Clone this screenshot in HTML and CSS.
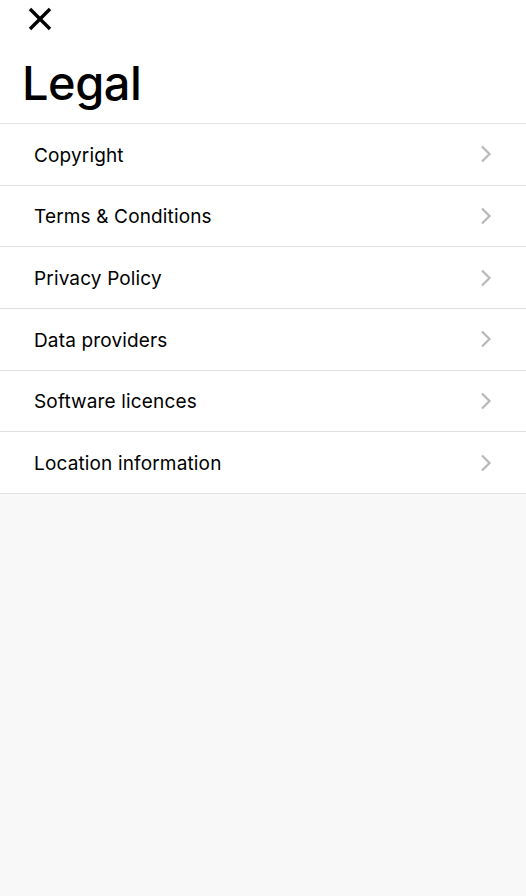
FILE: index.html
```html
<!DOCTYPE html>
<html lang="en">
<head>
<meta charset="utf-8">
<title>Legal</title>
<link rel="stylesheet" href="styles.css">
</head>
<body>
<div class="page">
  <header class="header">
    <button class="close" aria-label="Close">
      <svg width="24" height="24" viewBox="0 0 24 24"><path d="M2 2 L22 22 M22 2 L2 22" stroke="#000" stroke-width="3.4" fill="none"/></svg>
    </button>
    <h1 class="title">Legal</h1>
  </header>
  <ul class="list">
    <li class="row"><span class="label">Copyright</span><svg class="chev" width="12" height="18" viewBox="0 0 12 18"><path d="M2 1.5 L9.5 9 L2 16.5" stroke="#b8b8b8" stroke-width="2.2" fill="none"/></svg></li>
    <li class="row"><span class="label">Terms &amp; Conditions</span><svg class="chev" width="12" height="18" viewBox="0 0 12 18"><path d="M2 1.5 L9.5 9 L2 16.5" stroke="#b8b8b8" stroke-width="2.2" fill="none"/></svg></li>
    <li class="row"><span class="label">Privacy Policy</span><svg class="chev" width="12" height="18" viewBox="0 0 12 18"><path d="M2 1.5 L9.5 9 L2 16.5" stroke="#b8b8b8" stroke-width="2.2" fill="none"/></svg></li>
    <li class="row"><span class="label">Data providers</span><svg class="chev" width="12" height="18" viewBox="0 0 12 18"><path d="M2 1.5 L9.5 9 L2 16.5" stroke="#b8b8b8" stroke-width="2.2" fill="none"/></svg></li>
    <li class="row"><span class="label">Software licences</span><svg class="chev" width="12" height="18" viewBox="0 0 12 18"><path d="M2 1.5 L9.5 9 L2 16.5" stroke="#b8b8b8" stroke-width="2.2" fill="none"/></svg></li>
    <li class="row"><span class="label">Location information</span><svg class="chev" width="12" height="18" viewBox="0 0 12 18"><path d="M2 1.5 L9.5 9 L2 16.5" stroke="#b8b8b8" stroke-width="2.2" fill="none"/></svg></li>
  </ul>
</div>
</body>
</html>
```
FILE: styles.css
```css
html, body {
  margin: 0;
  padding: 0;
  background: #f8f8f8;
  font-family: Inter, "Noto Sans", sans-serif;
  color: #000;
}
.page {
  min-height: 896px;
  background: #f8f8f8;
}
.header {
  background: #fff;
  padding: 7px 0 0 0;
  border-bottom: 1px solid #e2e2e2;
}
.close {
  display: block;
  margin-left: 28px;
  padding: 0;
  border: 0;
  background: none;
  width: 24px;
  height: 24px;
}
.close svg { display: block; }
.title {
  margin: 0;
  padding: 24px 0 0 22px;
  height: 68px;
  box-sizing: content-box;
  font-size: 47px;
  font-weight: 500;
  letter-spacing: -0.5px;
  line-height: 56px;
}
.list {
  list-style: none;
  margin: 0;
  padding: 0;
  background: #fff;
}
.row {
  display: flex;
  align-items: center;
  justify-content: space-between;
  height: 60.67px;
  padding: 0 34px 0 34px;
  border-bottom: 1px solid #e0e0e0;
}
.label {
  font-size: 19px;
  line-height: 24px;
  padding-top: 3px;
  font-weight: 400;
  letter-spacing: 0.15px;
}
.chev {
  display: block;
}
```
